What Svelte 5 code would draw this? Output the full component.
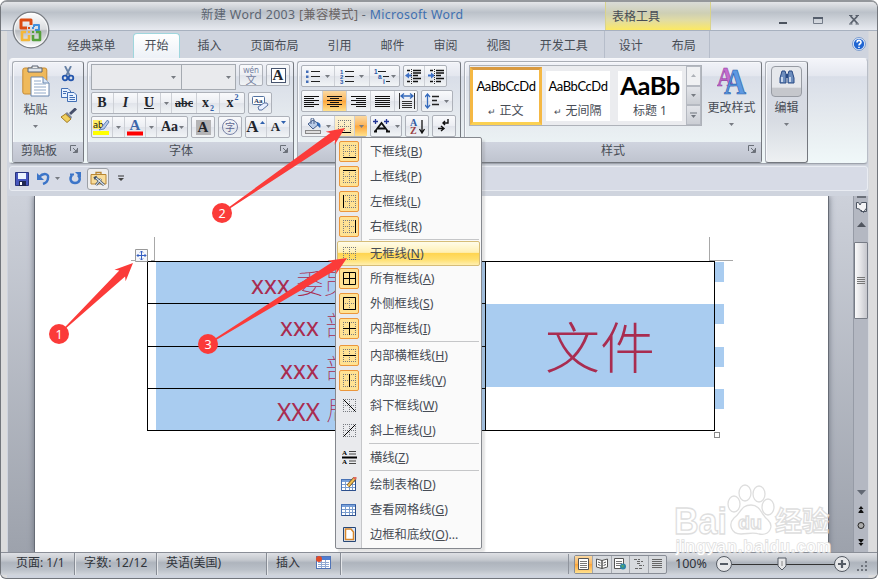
<script lang="ts">
  const tabs = ['经典菜单', '开始', '插入', '页面布局', '引用', '邮件', '审阅', '视图', '开发工具'];
  const toolTabs = ['设计', '布局'];

  const menu = [
    [
      { label: '下框线', key: 'B', icon: 'bottom', on: true },
      { label: '上框线', key: 'P', icon: 'top', on: true },
      { label: '左框线', key: 'L', icon: 'left', on: true },
      { label: '右框线', key: 'R', icon: 'right', on: true },
    ],
    [
      { label: '无框线', key: 'N', icon: 'none', hover: true },
      { label: '所有框线', key: 'A', icon: 'all', on: true },
      { label: '外侧框线', key: 'S', icon: 'outer', on: true },
      { label: '内部框线', key: 'I', icon: 'inner', on: true },
    ],
    [
      { label: '内部横框线', key: 'H', icon: 'horizontal', on: true },
      { label: '内部竖框线', key: 'V', icon: 'vertical', on: true },
      { label: '斜下框线', key: 'W', icon: 'down' },
      { label: '斜上框线', key: 'U', icon: 'up' },
    ],
    [{ label: '横线', key: 'Z', icon: 'rule' }],
    [
      { label: '绘制表格', key: 'D', icon: 'draw' },
      { label: '查看网格线', key: 'G', icon: 'grid' },
      { label: '边框和底纹', key: 'O', icon: 'page', more: '...' },
    ],
  ];

  // solid strokes laid over the dotted 13px grid
  const strokes: Record<string, string> = {
    bottom: 'M0 12.5H13',
    top: 'M0 .5H13',
    left: 'M.5 0V13',
    right: 'M12.5 0V13',
    none: '',
    all: 'M.5 .5H12.5V12.5H.5ZM6.5 0V13M0 6.5H13',
    outer: 'M.5 .5H12.5V12.5H.5Z',
    inner: 'M6.5 0V13M0 6.5H13',
    horizontal: 'M0 6.5H13',
    vertical: 'M6.5 0V13',
    down: 'M.5 .5L12.5 12.5',
    up: 'M.5 12.5L12.5 .5',
  };

  const rows = [
    { latin: 'xxx', rest: '委员会', pad: 95 },
    { latin: 'xxx', rest: '部', pad: 124 },
    { latin: 'xxx', rest: '部', pad: 124 },
    { latin: 'XXX', rest: '局', pad: 121 },
  ];

  const pointers = [
    { n: 1, x: 59, y: 334, tx: 133, ty: 263 },
    { n: 2, x: 222, y: 213, tx: 345, ty: 128 },
    { n: 3, x: 208, y: 344, tx: 347, ty: 258 },
  ];

  function arrow(p: { x: number; y: number; tx: number; ty: number }): string {
    const len = Math.hypot(p.tx - p.x, p.ty - p.y);
    const ux = (p.tx - p.x) / len;
    const uy = (p.ty - p.y) / len;
    const at = (d: number, s: number) =>
      `${(p.x + ux * d - uy * s).toFixed(1)},${(p.y + uy * d + ux * s).toFixed(1)}`;
    return [
      at(9, -0.8), at(len - 15, -4.2), at(len - 18, -8), at(len, 0),
      at(len - 18, 8), at(len - 15, 4.2), at(9, 0.8),
    ].join(' ');
  }
</script>

{#snippet caret()}
  <svg class="caret" width="5" height="3"><path d="M0 0H5L2.5 3Z" fill="#777b82" /></svg>
{/snippet}

{#snippet launcher()}
  <svg class="launcher" width="8" height="8" fill="none" stroke="#6b7079">
    <path d="M.5 6V.5H6M7.5 3V7.5H3M3 3L6.5 6.5" /><path d="M4 7H7V4Z" fill="#6b7079" stroke="none" />
  </svg>
{/snippet}

{#snippet lines(widths: number[], align: string)}
  <svg width="15" height="13" stroke="#111" stroke-width="1">
    {#each widths as w, i}
      {@const x = align === 'l' ? 0 : align === 'r' ? 15 - w : Math.floor((15 - w) / 2)}
      <path d="M{x} {i * 2 + 1.5}h{w}" />
    {/each}
  </svg>
{/snippet}

{#snippet border(kind: string)}
  <svg width="13" height="13" fill="none">
    <path d="M0 .5H13M0 12.5H13M.5 0V13M12.5 0V13M6.5 0V13M0 6.5H13" stroke="#777a80" stroke-dasharray="1 1"
      opacity={kind === 'all' ? 0 : 1} />
    <path d={strokes[kind]} stroke="#000" />
  </svg>
{/snippet}

<div class="window">
  <header class="titlebar">
    <div class="title">新建 Word 2003 <i>[兼容模式]</i> - <b>Microsoft Word</b></div>
    <div class="tooltitle">表格工具</div>
    <div class="controls">
      <svg width="8" height="12"><path d="M0 10H8" stroke="#4c535e" stroke-width="2" /></svg>
      <svg width="10" height="12"><path d="M.5 5H9.5V10.5H.5Z" fill="none" stroke="#737b88" /><path d="M0 5H10" stroke="#555e6c" stroke-width="2" /></svg>
      <svg width="10" height="12"><path d="M1.5 3L8.5 10.500M8.500 3L1.500 10.500" stroke="#59606c" stroke-width="1.8" /><path d="M0 2.5H3.5M6.5 2.5H10M0 11H3.5M6.5 11H10" stroke="#59606c" /></svg>
    </div>
  </header>

  <nav class="tabs">
    {#each tabs as tab, i}
      <span class="tab" class:active={i === 1}>{tab}</span>
    {/each}
    <div class="tooltabs">
      {#each toolTabs as tab}<span class="tab">{tab}</span>{/each}
    </div>
    <svg class="help" width="14" height="14"><circle cx="7" cy="7" r="6.4" fill="#fff" stroke="#6f93ca" /><circle cx="7" cy="7" r="5.2" fill="#2166d2" /><path d="M5 5.5C5 2.7 9 2.8 9 5.2C9 6.8 7 6.7 7 8.4M7 9.8V11" stroke="#fff" stroke-width="1.6" fill="none" /></svg>
  </nav>

  <section class="ribbon">
    <div class="group clipboard">
      <div class="body">
        <div class="paste">
          <svg width="28" height="32" viewBox="0 0 28 32">
            <rect x=".8" y="3" width="24" height="26" rx="2" fill="#efb95b" stroke="#c68a32" />
            <path d="M6 3H20V7H6Z" fill="#dfe4e9" stroke="#596372" /><path d="M10 3V1H16V3" fill="#eee" stroke="#596372" />
            <path d="M9 12H21L27 18V31H9Z" fill="#fff" stroke="#6b87ae" /><path d="M21 12V18H27" fill="#dbe7f6" stroke="#6b87ae" />
            <path d="M12 16H19M12 19H24M12 22H24M12 25H24M12 28H24" stroke="#91a9c8" />
          </svg>
          <span>粘贴</span>
          {@render caret()}
        </div>
        <div class="small">
          <svg width="14" height="16" fill="none"><path d="M4 0L9 10M10 0L5 10" stroke="#6680a5" stroke-width="1.8" /><circle cx="4" cy="12" r="2.3" stroke="#2456ad" stroke-width="1.8" /><circle cx="10" cy="12" r="2.3" stroke="#2456ad" stroke-width="1.8" /></svg>
          <svg width="16" height="14" stroke="#426fb4" fill="#e6f1ff"><path d="M.5 .5H7L9.5 3V9.5H.5Z" /><path d="M6.5 4.5H13L15.5 7V13.5H6.5Z" /><path d="M2 3.5H6M2 5.5H5M8.5 7.5H12M8.5 9.5H14M8.5 11.5H14" /></svg>
          <svg width="16" height="15"><path d="M15 .5L9 6" stroke="#47506b" stroke-width="3" /><path d="M6 4L11 9L10 11L4 6Z" fill="#7d8598" /><path d="M4.5 6L10 11L6 14.5L0 9Z" fill="#f1d05d" stroke="#a17b24" /></svg>
        </div>
      </div>
      <footer>剪贴板{@render launcher()}</footer>
    </div>

    <div class="group font">
      <div class="body rows">
        <div class="row tall">
          <div class="combo wide">{@render caret()}</div>
          <div class="combo">{@render caret()}</div>
          <div class="set g3"><span class="cell w24 wen"><small>wén</small><span>文</span></span></div>
          <div class="set g3"><span class="cell w24"><span class="boxed">A</span></span></div>
        </div>
        <div class="row">
          <div class="set">
            <span class="cell w23 serif"><b>B</b></span>
            <span class="cell w24 serif"><em>I</em></span>
            <span class="cell w23 serif"><u>U</u></span>
            <span class="cell w11">{@render caret()}</span>
            <span class="cell w25 serif strike">abc</span>
            <span class="cell w23 serif">x<sub>2</sub></span>
            <span class="cell w25 serif">x<sup>2</sup></span>
          </div>
          <div class="set g3"><span class="cell w24">
            <svg width="17" height="15"><rect x=".5" y=".5" width="12" height="8" rx="1" fill="#fff" stroke="#5372a0" /><text x="2" y="7" font-size="7" font-weight="bold" font-family="Liberation Serif" fill="#27395e">Aa</text><path d="M6 11L12 7H15L16 9L10 14H7Z" fill="#e8efff" stroke="#5b73a2" /></svg>
          </span></div>
        </div>
        <div class="row">
          <div class="set">
            <span class="cell w22">
              <svg width="17" height="16"><rect width="9" height="9" y="1" fill="#ffef65" /><text x="0" y="8.5" font-size="9" font-family="Noto Sans" fill="#111">ab</text><path d="M14.5 1L8 9L6 11L11 10L16 3Z" fill="#b7c9e8" stroke="#476eaa" stroke-width=".8" /><rect y="12" width="16" height="4" fill="#ff0" /></svg>
            </span>
            <span class="cell w12">{@render caret()}</span>
            <span class="cell w21">
              <svg width="16" height="17"><text x="2.5" y="11" font-size="15" font-weight="bold" font-family="Liberation Serif" fill="#3d67aa">A</text><rect y="12.500" width="16" height="4" fill="#f00" /></svg>
            </span>
            <span class="cell w11">{@render caret()}</span>
            <span class="cell w31 serif">Aa{@render caret()}</span>
          </div>
          <div class="set g3"><span class="cell w24"><span class="shade">A</span></span></div>
          <div class="set g3"><span class="cell w24"><span class="ring">字</span></span></div>
          <div class="set g3">
            <span class="cell w22 serif big">A<svg width="5" height="3"><path d="M0 3H5L2.5 0Z" fill="#2f60ae" /></svg></span>
            <span class="cell w23 serif shrink">A<svg width="5" height="3"><path d="M0 0H5L2.5 3Z" fill="#2f60ae" /></svg></span>
          </div>
        </div>
      </div>
      <footer>字体{@render launcher()}</footer>
    </div>

    <div class="group para">
      <div class="body rows">
        <div class="row">
          <div class="set">
            <span class="cell w34">
              <svg width="15" height="15"><path d="M5 2.5H14M5 7.5H14M5 12.5H14" stroke="#222" /><path d="M0 1.500H2.500V4H0ZM0 6.500H2.500V9H0ZM0 11.500H2.500V14H0Z" fill="#426db7" /></svg>{@render caret()}
            </span>
            <span class="cell w35">
              <svg width="15" height="15"><path d="M5 2.5H14M5 7.5H14M5 12.5H14" stroke="#222" /><g font-size="6" font-weight="bold" font-family="Liberation Sans" fill="#2856a7"><text y="4.5">1</text><text y="9.5">2</text><text y="14.5">3</text></g></svg>{@render caret()}
            </span>
            <span class="cell w30">
              <svg width="16" height="15"><path d="M4 2.5H12M9 7.5H15M12 12.5H16" stroke="#222" /><g font-size="6.5" font-weight="bold" font-family="Liberation Sans" fill="#2856a7"><text y="4.5">1</text><text x="4" y="9.5">a</text><text x="9" y="14.5">i</text></g></svg>{@render caret()}
            </span>
          </div>
          <div class="set g3">
            {#each ['M0 6.5L4 3.5V5.5H7V7.5H4V9.5Z', 'M7 6.5L3 3.5V5.5H0V7.5H3V9.5Z'] as d}
              <span class="cell w22"><svg width="17" height="15"><path d="M2 1.5H5M8 1.5H16M8 4H16M8 6.500H13M8 9.5H16M2 12.500H5M8 12.500H13" stroke="#111" stroke-width="1.3" /><path {d} fill="#3e70c5" /><path d="M6.5 0V15" stroke="#333" stroke-dasharray="1 1" /></svg></span>
            {/each}
          </div>
        </div>
        <div class="row">
          <div class="set">
            <span class="cell w22">{@render lines([15, 10, 15, 10, 15, 10], 'l')}</span>
            <span class="cell w24 lit">{@render lines([15, 9, 15, 9, 15, 9], 'c')}</span>
            <span class="cell w24">{@render lines([15, 10, 15, 10, 15, 10], 'r')}</span>
            <span class="cell w24">{@render lines([15, 15, 15, 15, 15, 15], 'l')}</span>
            <span class="cell w23"><svg width="16" height="16"><path d="M.5 0V16M15.5 0V16M3 8.5H13M3 10.5H13M3 12.5H13M3 14.5H13" stroke="#333" /><path d="M2 3H14M5 .5L2 3L5 5.5M11 .5L14 3L11 5.5" fill="none" stroke="#3569ba" stroke-width="1.3" /></svg></span>
          </div>
          <div class="set g3">
            <span class="cell w32"><svg width="15" height="16"><path d="M2.5 2V14M0 4L2.5 1L5 4M0 12L2.5 15L5 12" fill="none" stroke="#346abd" stroke-width="1.3" /><path d="M7 3.5H14M7 7.5H12M7 11.5H14" stroke="#222" stroke-width="1.3" /></svg>{@render caret()}</span>
          </div>
        </div>
        <div class="row">
          <div class="set">
            <span class="cell w34"><svg width="17" height="16"><path d="M3 6L8 2L14 6L8 11Z" fill="#b9cbe6" stroke="#465f8b" /><path d="M6 6V1C6-.5 9-.5 9 2V6" stroke="#465f8b" fill="none" /><path d="M12 4C16 5 16 8 15 10L12 7Z" fill="#3268b4" /><rect x=".5" y="12.5" width="15" height="3" fill="#ddd" stroke="#888" /></svg>{@render caret()}</span>
            <span class="cell w20 pale">{@render border('bottom')}</span>
            <span class="cell w12 lit">{@render caret()}</span>
          </div>
          <div class="set g3"><span class="cell w32"><svg width="18" height="15"><path d="M1 12.500H4M2 12.500L8.500 4L15 12.500M13 12.500H17M5 9.500H12" fill="none" stroke="#111" stroke-width="1.8" /><path d="M0 2.5H5M2.5 0V5M11 2.5H16M13.5 0V5" stroke="#223494" stroke-width="1.3" /></svg>{@render caret()}</span></div>
          <div class="set g3"><span class="cell w24"><svg width="17" height="17"><g font-size="10" font-weight="bold" font-family="Liberation Serif"><text x="1" y="8" fill="#315ba2">A</text><text x="1" y="16" fill="#9a3d42">Z</text></g><path d="M13 2V14M10.5 11L13 15L15.5 11" fill="none" stroke="#111" stroke-width="1.3" /></svg></span></div>
          <div class="set g3"><span class="cell w24"><svg width="12" height="14"><path d="M10 0V4H5M7 2L5 4L7 6M0 9.5H6M3 7L6 9.5L3 12" fill="none" stroke="#111" stroke-width="1.4" /></svg></span></div>
        </div>
      </div>
      <footer></footer>
    </div>

    <div class="group styles">
      <div class="body">
        <div class="gallery">
          <div class="style chosen"><strong>AaBbCcDd</strong><span><small>↵</small> 正文</span></div>
          <div class="style"><strong>AaBbCcDd</strong><span><small>↵</small> 无间隔</span></div>
          <div class="style heading"><strong>AaBb</strong><span>标题 1</span></div>
          <div class="spin">
            <span><svg width="5" height="3"><path d="M0 3H5L2.5 0Z" fill="#aeb2b8" /></svg></span>
            <span>{@render caret()}</span>
            <span><svg width="7" height="7"><path d="M0 1H7" stroke="#6f747d" /><path d="M1 3H6L3.5 6Z" fill="#6f747d" /></svg></span>
          </div>
        </div>
        <div class="change">
          <svg width="30" height="29"><g font-family="Liberation Serif" font-weight="bold"><text x="0" y="19" font-size="27" textLength="17" lengthAdjust="spacingAndGlyphs" fill="#c46cce" stroke="#923a9e" stroke-width=".6">A</text><text x="7" y="27" font-size="35" textLength="22" lengthAdjust="spacingAndGlyphs" fill="#5c99e2" stroke="#285dab" stroke-width=".7">A</text></g></svg>
          <span>更改样式</span>
          {@render caret()}
        </div>
      </div>
      <footer>样式{@render launcher()}</footer>
    </div>

    <div class="group edit">
      <div class="find"><svg width="16" height="14"><path d="M3 1H6L7 4V13H1V8ZM10 1H13L15 8V13H9V4Z" fill="#6d8dbd" stroke="#294a84" /><path d="M7 4H9V8H7Z" fill="#294a84" /><path d="M3 7V12M11 7V12" stroke="#e7effb" stroke-width="1.5" /></svg></div>
      <span>编辑</span>
      {@render caret()}
    </div>
  </section>

  <div class="quick">
    <svg width="14" height="14"><path d="M.5 .5H13.5V13.5H.5Z" fill="#4656bd" stroke="#29357f" /><rect x="3" y="1" width="8" height="6" fill="#edf5ff" /><rect x="4" y="9" width="7" height="5" fill="#202752" /><rect x="5" y="10" width="2" height="3" fill="#fff" /></svg>
    <svg width="13" height="13"><path d="M2 5C7 0 12 2 11 6C11 9 9 11 6 12" fill="none" stroke="#3c75c8" stroke-width="2.4" /><path d="M0 1V8H7Z" fill="#3c75c8" /></svg>
    {@render caret()}
    <svg width="13" height="13"><path d="M3 3C0 7 2 11 6 11C11 11 12 6 9 3" fill="none" stroke="#3c75c8" stroke-width="2.5" /><path d="M6 0H12V6Z" fill="#3c75c8" /><path d="M1 2.5H5" stroke="#3c75c8" stroke-width="2" /></svg>
    <span class="tool"><svg width="17" height="16"><path d="M1 3.500H16V13H1Z" fill="#f8dc9a" stroke="#b98632" /><path d="M6 3V1.5H11V3" fill="none" stroke="#b98632" stroke-width="1.3" /><path d="M6 14L11 8M6 7L14 14M4 7.500L7 6" stroke="#3e5068" stroke-width="2.6" /><path d="M6 14L11 8M6 7L14 14" stroke="#dbe5ef" stroke-width="1.1" /></svg></span>
    <svg width="6" height="7"><path d="M0 1H6" stroke="#333" /><path d="M0 3H6L3 6Z" fill="#444" /></svg>
  </div>

  <main class="workspace">
    <div class="page">
      <div class="table">
        <div class="left">
          {#each rows as row}
            <div class="trow"><div class="sel" style:padding-left="{row.pad}px">{row.latin} <span>{row.rest}</span></div></div>
          {/each}
        </div>
        <div class="right"><div>文件</div></div>
        <div class="ends">{#each rows as _}<i></i>{/each}</div>
        <svg class="move" width="13" height="13"><path d="M.5 .5H12.5V12.5H.5Z" fill="#f4f6fb" stroke="#999" /><path d="M6.5 2V11M2 6.5H11M5 3.5L6.5 2L8 3.5M5 9.5L6.5 11L8 9.5M3.5 5L2 6.5L3.5 8M9.5 5L11 6.5L9.5 8" fill="none" stroke="#345fc2" /></svg>
        <i class="crop first"></i>
        <i class="crop last"></i>
        <i class="resize"></i>
      </div>
    </div>
    <div class="scroll">
      <div class="split"></div>
      <div class="ruler"><svg width="13" height="12" fill="#f3f3f5" stroke="#4c5461"><path d="M1.5 7.500V1.500H3.500L5 4L6.500 1.500H11.500V10.500H6L4.500 8Z" /><path d="M6 9L8.500 11.500L11 7.500" fill="none" /></svg></div>
      <div class="up"><svg width="9" height="5"><path d="M0 5H9L4.5 0Z" fill="#50555f" /></svg></div>
      <div class="thumb"><i></i><i></i><i></i><i></i></div>
      <div class="track"><svg width="9" height="5"><path d="M0 0H9L4.5 5Z" fill="#626873" /></svg></div>
      <svg class="browse" width="10" height="51" fill="#111"><path d="M2.500 8L5 5L7.500 8ZM2.500 11L5 8L7.500 11ZM2.500 11H7.500V12H2.500Z" /><circle cx="5" cy="24.500" r="3" fill="#aaa" stroke="#222" /><path d="M2.500 38H7.500V39H2.500ZM2.500 39H7.500L5 42ZM2.500 42H7.500L5 45Z" /></svg>
    </div>
  </main>

  <footer class="status">
    <span class="s1">页面: 1/1</span>
    <span class="s2">字数: 12/12</span>
    <span class="s3">英语(美国)</span>
    <span class="s4">插入
      <svg width="15" height="13"><rect x=".5" y=".5" width="14" height="12" fill="#fff" stroke="#5074b7" /><path d="M1 1H14V4H1Z" fill="#507dd1" /><path d="M2 6.5H13M2 8.5H13M2 10.5H13M5.5 4V12M9.5 4V12" stroke="#91a9d2" /><circle cx="3" cy="3" r="3" fill="#df4b29" /></svg>
    </span>
    <div class="tail">
      <div class="views">
        <span class="lit"><svg width="11" height="12"><path d="M.5 .5H10.5V11.5H.5Z" fill="#fff" stroke="#555" /><path d="M2 3.5H9M2 5.5H9M2 7.5H9M2 9.5H9" stroke="#777" /></svg></span>
        <span><svg width="12" height="12" fill="#fff" stroke="#555"><path d="M.5 1L6 2.5V10.5L.5 9ZM11.5 1L6 2.5V10.5L11.5 9Z" /><path d="M2 4L4.5 5M2 6.5L4.5 7.5M10 4L7.5 5M10 6.5L7.5 7.5" /></svg></span>
        <span><svg width="13" height="12"><path d="M.5 .5H9.5V10.5H.5Z" fill="#fff" stroke="#555" /><path d="M2 3.5H8M2 5.5H8M2 7.5H8" stroke="#777" /><circle cx="9" cy="8.5" r="3" fill="#2c86aa" /><path d="M7 7.5L9 10L10 7" fill="#57ac5c" /></svg></span>
        <span><svg width="10" height="12" stroke="#666"><path d="M0 1.5H6M3 3.5H9M3 5.5H7M5 7.5H10M1 10.5H8" stroke-dasharray="3 1" /></svg></span>
        <span><svg width="10" height="12" stroke="#666"><path d="M0 1.5H10M0 3.5H10M0 5.5H10M0 7.5H10M0 9.5H10" /></svg></span>
      </div>
      <span class="percent">100%</span>
      <svg class="zoom" width="136" height="20" fill="none">
        <path d="M17 10.5H120" stroke="#333" />
        <g fill="#e6e7e9" stroke="#555b64"><circle cx="9" cy="10" r="7.5" /><circle cx="127" cy="10" r="7.5" /><path d="M63 4H71V12L67 16L63 12Z" /></g>
        <path d="M5 10H13M123 10H131M127 6V14" stroke="#555b64" stroke-width="2.2" /><path d="M67 7V12" stroke="#888" />
      </svg>
      <svg class="grip" width="11" height="11" fill="#70757e"><path d="M8 0H10V2H8ZM4 4H6V6H4ZM8 4H10V6H8ZM0 8H2V10H0ZM4 8H6V10H4ZM8 8H10V10H8Z" /></svg>
    </div>
  </footer>

  <svg class="orb" width="38" height="38" viewBox="0 0 38 38">
    <defs><linearGradient id="orb" x2="0" y2="1"><stop stop-color="#fff" /><stop offset=".48" stop-color="#dadcdf" /><stop offset=".52" stop-color="#b8bbc0" /><stop offset="1" stop-color="#fff" /></linearGradient></defs>
    <circle cx="19" cy="19" r="17.8" fill="url(#orb)" stroke="#797d83" stroke-width="1.3" /><circle cx="19" cy="19" r="16.5" fill="none" stroke="#fff" opacity=".7" />
    <g fill="none" stroke-linejoin="round"><path d="M15 17H9V9H19V14" stroke="#dc4b10" stroke-width="3" /><path d="M22 16V14H27V19H23" stroke="#3f8fdc" stroke-width="2" /><path d="M14 21H10V29H17V24" stroke="#f4b737" stroke-width="2.6" /><path d="M21 24V29H28V21H24" stroke="#55a03b" stroke-width="2.6" /></g>
    <g><path d="M16 16H18V18H16Z" fill="#dc4b10" /><path d="M20 16H22V18H20Z" fill="#3f8fdc" /><path d="M16 20H18V22H16Z" fill="#f4b737" /><path d="M20 20H22V22H20Z" fill="#55a03b" /></g>
  </svg>

  <div class="menu">
    {#each menu as section, i}
      {#if i > 0}<hr />{/if}
      {#each section as item}
        <div class="item" class:hover={item.hover}>
          <span class="mark" class:on={item.on}>
            {#if item.icon === 'rule'}
              <svg width="15" height="15"><g font-size="7" font-family="Liberation Serif" font-weight="bold"><text y="5">A</text><text y="14">A</text></g><path d="M7 1.5H14M7 4H14M7 11H14M7 13.5H14" stroke="#444" /><path d="M0 7.5H15" stroke="#000" stroke-width="2" /></svg>
            {:else if item.icon === 'page'}
              <svg width="13" height="15"><path d="M.5 .5H12.5V14.5H.5Z" fill="#dbe8fb" stroke="#274777" /><path d="M2.5 2H8L10.5 5V12.5H2.5Z" fill="#fff" stroke="#d9872b" stroke-width="1.5" /></svg>
            {:else if item.icon === 'draw' || item.icon === 'grid'}
              <svg width="16" height="15"><rect x=".5" y="2.5" width="14" height="11" fill="#fff" stroke="#4872b5" /><path d="M1 3H14V5H1Z" fill="#78a1dc" /><path d="M1 7.5H14M1 10.5H14M4.5 3V14M8.5 3V14M11.5 3V14" stroke="#7b9dce" /><path d="M14.500 3V13.500H1" fill="none" stroke="#2d4f8c" />{#if item.icon === 'draw'}<path d="M14 1L7 9" stroke="#78501d" stroke-width="3.6" /><path d="M14 1L7 9" stroke="#efbf55" stroke-width="2" /><path d="M13 2L15 0" stroke="#df675c" stroke-width="3" />{/if}</svg>
            {:else}
              {@render border(item.icon)}
            {/if}
          </span>
          <span>{item.label}(<u>{item.key}</u>){item.more ?? ''}</span>
        </div>
      {/each}
    {/each}
  </div>

  <svg class="watermark" width="170" height="84" viewBox="0 0 170 84">
    <g fill="#fff" stroke="#dedede" stroke-width="1.3" font-family="Liberation Sans, Noto Sans CJK SC, sans-serif" font-weight="bold">
      <text x="2" y="50" font-size="36" textLength="53" lengthAdjust="spacingAndGlyphs">Bai</text>
      <ellipse cx="62" cy="20" rx="6" ry="8" /><ellipse cx="73" cy="9" rx="6" ry="8" /><ellipse cx="87" cy="10" rx="6" ry="8" /><ellipse cx="96" cy="23" rx="6" ry="8" />
      <path d="M79 21C69 21 69 29 62 34C56 40 59 50 69 50C76 50 81 48 87 50C98 52 102 42 96 36C89 31 89 21 79 21Z" />
      <text x="66" y="45" font-size="19" textLength="24" lengthAdjust="spacingAndGlyphs">du</text>
      <text x="103" y="47" font-size="27" textLength="54" lengthAdjust="spacingAndGlyphs">经验</text>
    </g>
    <text x="4" y="68" font-family="Liberation Sans" font-size="17" textLength="155" fill="#fff" stroke="#dedede" stroke-width="1.6" paint-order="stroke">jingyan.baidu.com</text>
  </svg>

  <svg class="pointers" width="878" height="579">
    {#each pointers as p}
      <polygon points={arrow(p)} fill="#fb3b39" />
      <circle cx={p.x} cy={p.y} r="10" fill="#fb3b39" />
      <text x={p.x} y={p.y + 4.5} text-anchor="middle" fill="#fff" font-size="12.5">{p.n}</text>
    {/each}
  </svg>
</div>

<style>
  :global(body) {
    background: #fff;
  }

  .window {
    position: relative;
    width: 878px;
    height: 579px;
    overflow: hidden;
    display: flex;
    flex-direction: column;
    border: 1px solid #72767c;
    border-top: 2px solid #94979b;
    border-radius: 7px 7px 6px 6px;
    background: linear-gradient(90deg, #dcdcdd 6px, #cfd4de 6px 867px, #dcdcdd 868px);
    font: 12px/16px 'Noto Sans', 'Noto Sans CJK SC', sans-serif;
    color: #474c55;
  }

  .window,
  .window * {
    box-sizing: border-box;
  }

  svg {
    display: block;
    flex: none;
  }

  .titlebar {
    height: 29px;
    flex: none;
    display: flex;
    background: linear-gradient(#e5e6e9, #cfd3d8 20%, #bbc1c9 37%, #c8cdd4 55%, #e7eaf0);
    border-bottom: 1px solid #a8b1bf;
  }

  .title {
    width: 404px;
    margin-left: 200px;
    padding-top: 5px;
    font-size: 12.3px;
    letter-spacing: 0.35px;
    white-space: nowrap;
    color: #5c6571;
  }

  .title i {
    font-style: normal;
    color: #6b6565;
  }

  .title b {
    font-weight: 400;
    color: #3f70b0;
  }

  .tooltitle {
    width: 106px;
    padding: 7px 6px 0;
    border: solid #d9d38c;
    border-width: 0 1px;
    background: linear-gradient(#d9dbd7, #cecfb4 40%, #e1dca4 65%, #fce963);
  }

  .controls {
    display: flex;
    gap: 26px;
    margin: 11px 0 0 68px;
  }

  .tabs {
    height: 27px;
    flex: none;
    display: flex;
    padding-left: 52px;
  }

  .tab {
    margin: 2px 3px 0;
    padding: 5px 11.5px 0;
    white-space: nowrap;
  }

  .tab.active {
    padding: 4px 10.5px 0;
    border: 1px solid #9fd6dd;
    border-bottom: 0;
    border-radius: 4px 4px 0 0;
    background: linear-gradient(#fff, #edf1f7);
  }

  .tooltabs {
    display: flex;
    width: 106px;
    margin-left: 2px;
    border: solid #b6bdca;
    border-width: 0 1px;
  }

  .tooltabs .tab {
    margin: 2px 2px 0 0;
    padding: 5px 13.5px 0;
  }

  .help {
    margin: 6px 0 0 142px;
  }

  .ribbon {
    height: 106px;
    flex: none;
    margin: 0 9px 0 8px;
    padding: 2px;
    display: flex;
    gap: 3px;
    border: 1px solid #b8bdc6;
    border-color: #f7f8fa #b8bdc6 #9da2ac #f5f6f8;
    border-radius: 4px;
    background: linear-gradient(#f4f5fa, #e4e7ef 16%, #d9dee8 17%, #e6ebef 60%, #f0f8f9);
    box-shadow: 0 1px #c2c6ce;
  }

  .group {
    height: 102px;
    border: 1px solid #989ca4;
    border-color: #a9adb5 #74787f #74787f #a9adb5;
    border-radius: 3px;
    display: flex;
    flex-direction: column;
    box-shadow: inset 1px 1px #f7f8fb;
  }

  .group > footer {
    position: relative;
    height: 20px;
    padding-top: 1px;
    flex: none;
    text-align: center;
    background: linear-gradient(#d0d4df, #bfc4cf);
  }

  .font > footer {
    padding-right: 19px;
  }

  .clipboard > footer {
    padding-right: 18px;
  }

  .launcher {
    position: absolute;
    right: 5px;
    top: 3px;
  }

  .body {
    flex: 1;
    min-height: 0;
    display: flex;
  }

  .clipboard { width: 72px; }
  .font { width: 207px; }
  .para { width: 164px; }
  .styles { width: 298px; }
  .edit { width: 43px; }

  .paste {
    display: flex;
    flex-direction: column;
    align-items: center;
    width: 48px;
    padding: 3px 3px 0 0;
  }

  .paste span {
    margin: 5px 0 7px;
  }

  .small {
    display: flex;
    flex-direction: column;
    gap: 6px;
    padding-top: 4px;
  }

  .rows {
    flex-direction: column;
    gap: 3px;
    padding: 3px;
  }

  .font .rows {
    gap: 2px;
    padding-top: 2px;
  }

  .row {
    height: 22px;
    display: flex;
  }

  .row.tall {
    height: 26px;
  }

  .tall .set {
    height: 22px;
  }

  .combo {
    width: 54px;
    display: flex;
    align-items: center;
    justify-content: flex-end;
    padding-right: 4px;
    border: 1px solid #a5aab1;
    border-left: 0;
    background: #e9eaed;
  }

  .combo.wide {
    width: 92px;
    padding-right: 5px;
    border-left: 1px solid #a5aab1;
  }

  .set {
    display: flex;
    border: 1px solid #adb1b9;
    border-radius: 2px;
    background: linear-gradient(#f9fafc, #eceef3 48%, #e0e3ea 50%, #f1f4f6);
  }

  .g3 {
    margin-left: 3px;
  }

  .cell {
    display: flex;
    align-items: center;
    justify-content: center;
    gap: 4px;
    border-right: 1px solid #cdd0d6;
    color: #22252c;
    white-space: nowrap;
  }

  .set > .cell:first-child { margin-left: -1px; }
  .set > .cell:last-child { margin-right: -1px; border-right: 0; }

  .w11 { width: 11px; }
  .w12 { width: 12px; }
  .w20 { width: 20px; }
  .w21 { width: 21px; }
  .w22 { width: 22px; }
  .w23 { width: 23px; }
  .w24 { width: 24px; }
  .w25 { width: 25px; }
  .w30 { width: 30px; gap: 1px; }
  .w31 { width: 31px; }
  .w32 { width: 32px; }
  .w34 { width: 34px; }
  .w35 { width: 35px; }

  .serif {
    font: bold 14px/20px 'Liberation Serif', serif;
    gap: 1px;
  }

  .serif.big {
    font-size: 17px;
  }

  .serif.shrink {
    font-size: 13px;
  }

  .serif sub,
  .serif sup {
    font-size: 8px;
    line-height: 9px;
    color: #315ea8;
  }

  .serif sub { align-self: flex-end; }
  .serif sup { align-self: flex-start; }

  .serif.big svg,
  .serif.shrink svg {
    align-self: flex-start;
    margin-top: 4px;
  }

  .serif.strike {
    font-size: 12px;
    text-decoration: line-through;
  }

  .wen {
    flex-direction: column;
    gap: 0;
    font-size: 11px;
    line-height: 11px;
    color: #7380a0;
  }

  .wen small {
    font-size: 8px;
    line-height: 8px;
  }

  .boxed,
  .shade {
    width: 15px;
    height: 15px;
    border: 1px solid #46536d;
    background: #fff;
    font: bold 15px/13px 'Liberation Serif', serif;
    text-align: center;
  }

  .shade {
    border: 0;
    background: #b4b4b6;
    line-height: 15px;
  }

  .ring {
    width: 16px;
    height: 16px;
    border: 1px solid #7983a8;
    border-radius: 50%;
    font-size: 10px;
    line-height: 14px;
    text-align: center;
    color: #5e6793;
  }

  .lit {
    background: linear-gradient(#fbd9a2, #fbb75e 45%, #fda63b 50%, #ffe18d);
  }

  .pale {
    background: linear-gradient(#fdf3d5, #fbe4ad);
  }

  .styles .body {
    padding: 3px 0 0 4px;
  }

  .gallery {
    width: 233px;
    height: 61px;
    display: flex;
    align-items: center;
    border: 1px solid #aeb2b9;
    background: #ebecef;
  }

  .style {
    width: 64px;
    height: 50px;
    margin: 0 4px;
    flex: none;
    display: flex;
    flex-direction: column;
    align-items: center;
    background: #fff;
    white-space: nowrap;
  }

  .style.chosen {
    width: 72px;
    height: 58px;
    margin: 0;
    padding-top: 1px;
    border: 3px solid #f5b844;
    border-color: #d99a41 #f5b844 #fbd152;
  }

  .style strong {
    height: 30px;
    padding-top: 5px;
    font: 13px/20px Lato, sans-serif;
    letter-spacing: -0.4px;
    color: #000;
  }

  .style.heading strong {
    padding-top: 2px;
    font: bold 25.5px/25px Lato, sans-serif;
    letter-spacing: -0.5px;
  }

  .style span {
    padding-top: 2px;
  }

  .style small {
    font-size: 9px;
  }

  .spin {
    align-self: stretch;
    width: 15px;
    margin-left: auto;
    display: flex;
    flex-direction: column;
  }

  .spin span {
    flex: 1;
    display: flex;
    align-items: center;
    justify-content: center;
    border: 1px solid #b5b9c1;
    background: linear-gradient(#e2e4e9, #cbced4);
  }

  .spin span:first-child {
    background: #f0f1f3;
  }

  .change {
    display: flex;
    flex-direction: column;
    align-items: center;
    flex: 1;
    padding-top: 2px;
  }

  .change span {
    margin: 4px 0 7px;
  }

  .edit {
    align-items: center;
    background: linear-gradient(#ebedf3, #d6dae3 30%, #d8dce3 60%, #edf0f2);
  }

  .find {
    width: 31px;
    height: 31px;
    margin: 4px 0 3px;
    display: flex;
    justify-content: center;
    padding-top: 3px;
    border: 1px solid #979ba3;
    border-radius: 4px;
    background: linear-gradient(#e6e8ec 70%, #c5c7cc 72%);
  }

  .edit > span {
    margin-bottom: 7px;
  }

  .quick {
    height: 25px;
    flex: none;
    margin: 2px 9px 0 8px;
    padding-left: 5px;
    display: flex;
    align-items: center;
    gap: 8px;
    border: 1px solid #e9ecf2;
    border-radius: 3px;
    background: #d7dbe6;
  }

  .quick .caret {
    margin: 0 1px 0 -3px;
  }

  .tool {
    width: 22px;
    height: 22px;
    margin: 0 1px 0 -3px;
    display: grid;
    place-items: center;
    border: 1px solid #9ca0a7;
    border-radius: 3px;
    background: #eeeeef;
  }

  .workspace {
    flex: 1;
    min-height: 0;
    margin: 5px 9px 0 7px;
    display: flex;
    background: linear-gradient(#cdd1da, #9da2ac);
  }

  .page {
    width: 795px;
    margin-left: 26px;
    padding: 65px 0 0 112px;
    background: #fff;
    border: solid #666b75;
    border-width: 0 1px;
    box-shadow: 0 0 6px #6f7480;
    clip-path: inset(0 -8px);
  }

  .table {
    position: relative;
    display: flex;
    width: 568px;
    height: 170px;
    border: 1px solid #000;
  }

  .left {
    width: 338px;
    display: grid;
    grid-template-rows: 42px 43px 42px 41px;
    border-right: 1px solid #000;
  }

  .trow {
    padding-left: 8px;
    border-bottom: 1px solid #000;
  }

  .trow:last-child {
    border-bottom: 0;
  }

  .sel {
    height: 100%;
    background: #a9ccf0;
    color: #a92c50;
    font-size: 24.5px;
    line-height: 45px;
    white-space: nowrap;
  }

  .sel span {
    font: 100 27px/40px 'Noto Sans CJK SC', serif;
  }

  .right {
    flex: 1;
    padding-top: 42px;
  }

  .right div {
    width: 100%;
    height: 83px;
    background: #a9ccf0;
    color: #a92c50;
    text-align: center;
    font: 300 55px/80px 'Noto Sans CJK SC', serif;
  }

  .ends {
    position: absolute;
    left: 567px;
    top: 0;
    display: flex;
    flex-direction: column;
    gap: 22.3px;
  }

  .ends i {
    width: 9px;
    height: 20px;
    background: #a9ccf0;
  }

  .move {
    position: absolute;
    left: -13px;
    top: -13px;
  }

  .crop {
    position: absolute;
    width: 24px;
    height: 24px;
    top: -25px;
    border: solid #a8a8a8;
    border-width: 0 0 1px 1px;
  }

  .crop.first {
    left: -17px;
    border-width: 0 1px 1px 0;
    clip-path: polygon(0 23px, 5px 23px, 5px 24px, 20px 24px, 20px 0, 24px 0, 24px 24px, 0 24px);
  }

  .crop.last {
    left: 561px;
  }

  .resize {
    position: absolute;
    left: 566px;
    top: 170px;
    width: 6px;
    height: 6px;
    border: 1px solid #888;
    background: #fff;
  }

  .scroll {
    width: 15px;
    margin-left: auto;
    display: flex;
    flex-direction: column;
    align-items: center;
    border-left: 1px solid #969ba6;
    background: #b4b8c2;
  }

  .split {
    width: 9px;
    height: 2px;
    flex: none;
    background: #6b7079;
  }

  .ruler {
    margin-top: 3px;
  }

  .up {
    height: 29px;
    padding-top: 9px;
  }

  .thumb {
    width: 14px;
    height: 77px;
    display: flex;
    flex-direction: column;
    align-items: center;
    justify-content: center;
    gap: 1px;
    border: 1px solid #777c86;
    border-radius: 1px;
    background: linear-gradient(90deg, #f9f9fa, #e5e5e8 45%, #c5c6cc);
  }

  .thumb i {
    width: 8px;
    height: 1px;
    background: #777;
  }

  .track {
    flex: 1;
    width: 100%;
    display: flex;
    align-items: flex-end;
    justify-content: center;
    padding-bottom: 6px;
  }

  .status {
    height: 23px;
    flex: none;
    display: flex;
    align-items: center;
    margin-bottom: 3px;
    padding-left: 6px;
    border-top: 1px solid #8a8e97;
    background: linear-gradient(#dfe1e5, #c4c8ce 32%, #aeb4bd 44%, #bac0c8 75%, #d2d6dc);
    color: #30343b;
    white-space: nowrap;
  }

  .status > span {
    height: 22px;
    padding: 2px 0 0 9px;
    border-right: 1px solid #878c95;
    box-shadow: 1px 0 #e5e7ea;
  }

  .s1 { width: 68px; }
  .s2 { width: 82px; letter-spacing: 0.15px; }
  .s3 { width: 110px; }

  .s4 {
    width: 74px;
    display: flex;
    gap: 16px;
  }

  .s4 svg {
    margin-top: 1px;
  }

  .tail {
    flex: 1;
    display: flex;
    align-items: center;
    margin-left: 227px;
    border-left: 1px solid #8f949d;
    padding-left: 5px;
  }

  .views {
    display: flex;
    width: 93px;
    height: 19px;
    border: 1px solid #888d96;
    border-radius: 2px;
    background: #d7dade;
  }

  .views span {
    flex: 1;
    display: grid;
    place-items: center;
    border-right: 1px solid #a4a8af;
  }

  .views span:last-child {
    border-right: 0;
  }

  .percent {
    width: 40px;
    margin-left: 8px;
    font-size: 12.5px;
  }

  .grip {
    margin: 5px 0 0 6px;
  }

  .orb {
    position: absolute;
    left: 11px;
    top: 9px;
  }

  .menu {
    position: absolute;
    left: 334px;
    top: 135px;
    width: 147px;
    height: 412px;
    padding: 1px;
    border: 1px solid #85888e;
    border-radius: 2px;
    background: linear-gradient(90deg, #e9eaed 25px, #c5c6c9 25px 26px, #fafafa 26px);
    box-shadow: 3px 3px 2px #7773;
    font-size: 12.3px;
  }

  .menu hr {
    height: 1px;
    margin: 0 1px 1px 32px;
    border: 0;
    background: #c5c6c8;
  }

  .item {
    height: 25px;
    display: flex;
    align-items: center;
    gap: 11px;
    padding-left: 1px;
    border: 1px solid transparent;
    border-radius: 2px;
    white-space: nowrap;
  }

  .item.hover {
    border-color: #d6bd78;
    background: linear-gradient(#fffce9, #fff0b4 45%, #ffd551 50%, #ffdf6c 75%, #ffefb0);
  }

  .mark {
    width: 20px;
    height: 21px;
    display: grid;
    place-items: center;
    border: 1px solid transparent;
    border-radius: 2px;
  }

  .mark.on {
    border-color: #eb963b;
    background: #ffe293;
  }

  .watermark {
    position: absolute;
    left: 671px;
    top: 482px;
  }

  .pointers {
    position: absolute;
    left: -1px;
    top: -2px;
  }
</style>
